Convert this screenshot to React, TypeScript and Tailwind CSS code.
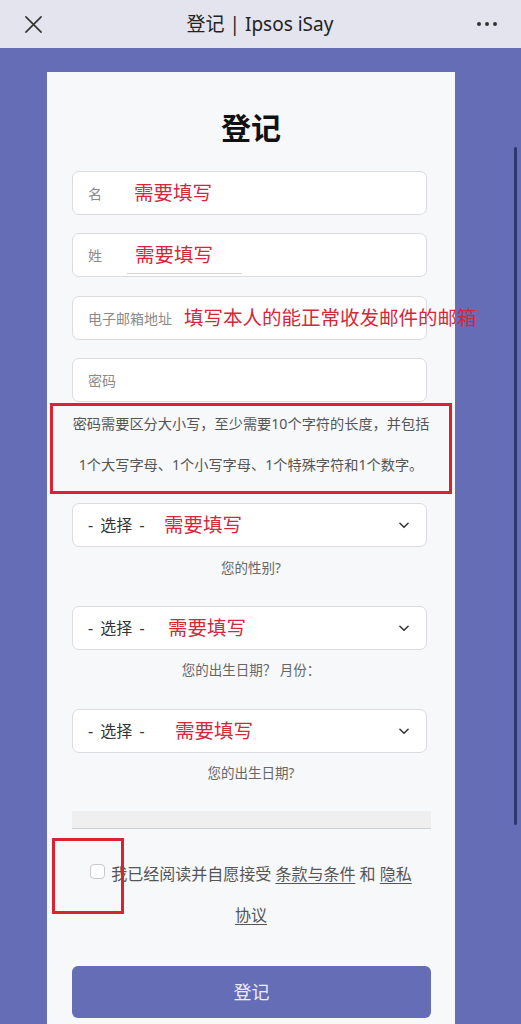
import React from "react";

const font = { fontFamily: '"Noto Sans", "Noto Sans CJK SC", sans-serif' };

function Chevron() {
  return (
    <svg width="14" height="14" viewBox="0 0 24 24" fill="none" stroke="#333" strokeWidth="2.6" strokeLinecap="round" strokeLinejoin="round">
      <path d="M5 9l7 7 7-7" />
    </svg>
  );
}

function TextInput({ ph, red, redLeft, underline }: { ph: string; red: string; redLeft: number; underline?: boolean }) {
  return (
    <div className="relative mx-[25px] flex h-[44px] w-[355px] items-center rounded-[7px] border border-[#dcdce0] bg-white pl-[15px]">
      <span className="text-[14px] text-[#8a8a8a]">{ph}</span>
      {red && (
        <span className="absolute top-[7px] whitespace-nowrap text-[19.5px] leading-[28px] text-[#d3283a]" style={{ left: redLeft }}>
          {red}
        </span>
      )}
      {underline && <div className="absolute bottom-[2px] left-[54px] h-px w-[115px] bg-[#d6d6d6]" />}
    </div>
  );
}

function Select({ redLeft }: { redLeft: number }) {
  return (
    <div className="relative mx-[25px] flex h-[44px] w-[355px] items-center justify-between rounded-[7px] border border-[#dcdce0] bg-white pl-[15px] pr-[15px]">
      <span className="text-[16px] text-[#333] [word-spacing:3px]">- 选择 -</span>
      <span className="absolute top-[7px] whitespace-nowrap text-[19.5px] leading-[28px] text-[#d3283a]" style={{ left: redLeft }}>
        需要填写
      </span>
      <Chevron />
    </div>
  );
}

export default function App() {
  return (
    <div className="relative h-[1024px] w-[521px] overflow-hidden bg-[#646db5]" style={font}>
      {/* header */}
      <div className="flex h-[48px] items-center justify-between bg-[#e3e4ee] px-[24px]">
        <svg width="19" height="19" viewBox="0 0 20 20" fill="none" stroke="#333" strokeWidth="1.7" strokeLinecap="round">
          <path d="M2 2l16 16M18 2L2 18" />
        </svg>
        <div className="text-[19px] text-[#222]">登记 | Ipsos iSay</div>
        <div className="flex gap-[4px]">
          <span className="h-[4px] w-[4px] rounded-full bg-[#333]" />
          <span className="h-[4px] w-[4px] rounded-full bg-[#333]" />
          <span className="h-[4px] w-[4px] rounded-full bg-[#333]" />
        </div>
      </div>

      {/* card */}
      <div className="relative ml-[47px] mt-[24px] w-[408px] bg-[#f7f8fa] pb-[40px] pt-[36px]">
        <h1 className="text-center text-[30px] font-bold leading-[40px] text-[#111]">登记</h1>

        <div className="mt-[23px]">
          <TextInput ph="名" red="需要填写" redLeft={61} />
        </div>
        <div className="mt-[18px]">
          <TextInput ph="姓" red="需要填写" redLeft={62} underline />
        </div>
        <div className="mt-[19px]">
          <TextInput ph="电子邮箱地址" red="填写本人的能正常收发邮件的邮箱" redLeft={111} />
        </div>
        <div className="mt-[18px]">
          <TextInput ph="密码" red="" redLeft={0} />
        </div>

        <div className="mx-[3px] mt-[1px] h-[91px] border-[3px] border-[#d92330] text-center text-[14.2px] text-[#555]">
          <div className="whitespace-nowrap leading-[36px]">密码需要区分大小写，至少需要10个字符的长度，并包括</div>
          <div className="whitespace-nowrap leading-[46px]">1个大写字母、1个小写字母、1个特殊字符和1个数字。</div>
        </div>

        <div className="mt-[9px]">
          <Select redLeft={91} />
        </div>
        <div className="mt-[10px] text-center text-[13.5px] leading-[22px] text-[#666]">您的性别?</div>

        <div className="mt-[27px]">
          <Select redLeft={95} />
        </div>
        <div className="mt-[9px] text-center text-[13.5px] leading-[22px] text-[#666]">您的出生日期？ 月份：</div>

        <div className="mt-[28px]">
          <Select redLeft={102} />
        </div>
        <div className="mt-[9px] text-center text-[13.5px] leading-[22px] text-[#666]">您的出生日期?</div>

        <div className="mx-[25px] mt-[27px] h-[18px] w-[359px] border-b border-[#cfcfd2] bg-[#efeff0]" />

        <div className="mx-[25px] mt-[25px] text-center text-[16px] leading-[41px] text-[#555]">
          <span className="relative mr-[6px] inline-block h-[15px] w-[15px] rounded-[4px] border border-[#c8c8cc] bg-white align-[1px]" />
          我已经阅读并自愿接受 <span className="underline underline-offset-[3px]">条款与条件</span> 和{" "}
          <span className="underline underline-offset-[3px]">隐私</span>
          <br />
          <span className="underline underline-offset-[3px]">协议</span>
        </div>

        <div className="absolute left-[5px] top-[766px] h-[76px] w-[72px] border-[3px] border-[#d92330]" />

        <button className="mx-[25px] mt-[30px] flex h-[52px] w-[359px] items-center justify-center rounded-[6px] bg-[#646db5] text-[18px] text-[#eceef8]">
          登记
        </button>
      </div>

      {/* scrollbar */}
      <div className="absolute left-[514px] top-[147px] h-[678px] w-[3px] rounded-full bg-[#2d376e]" />
    </div>
  );
}
